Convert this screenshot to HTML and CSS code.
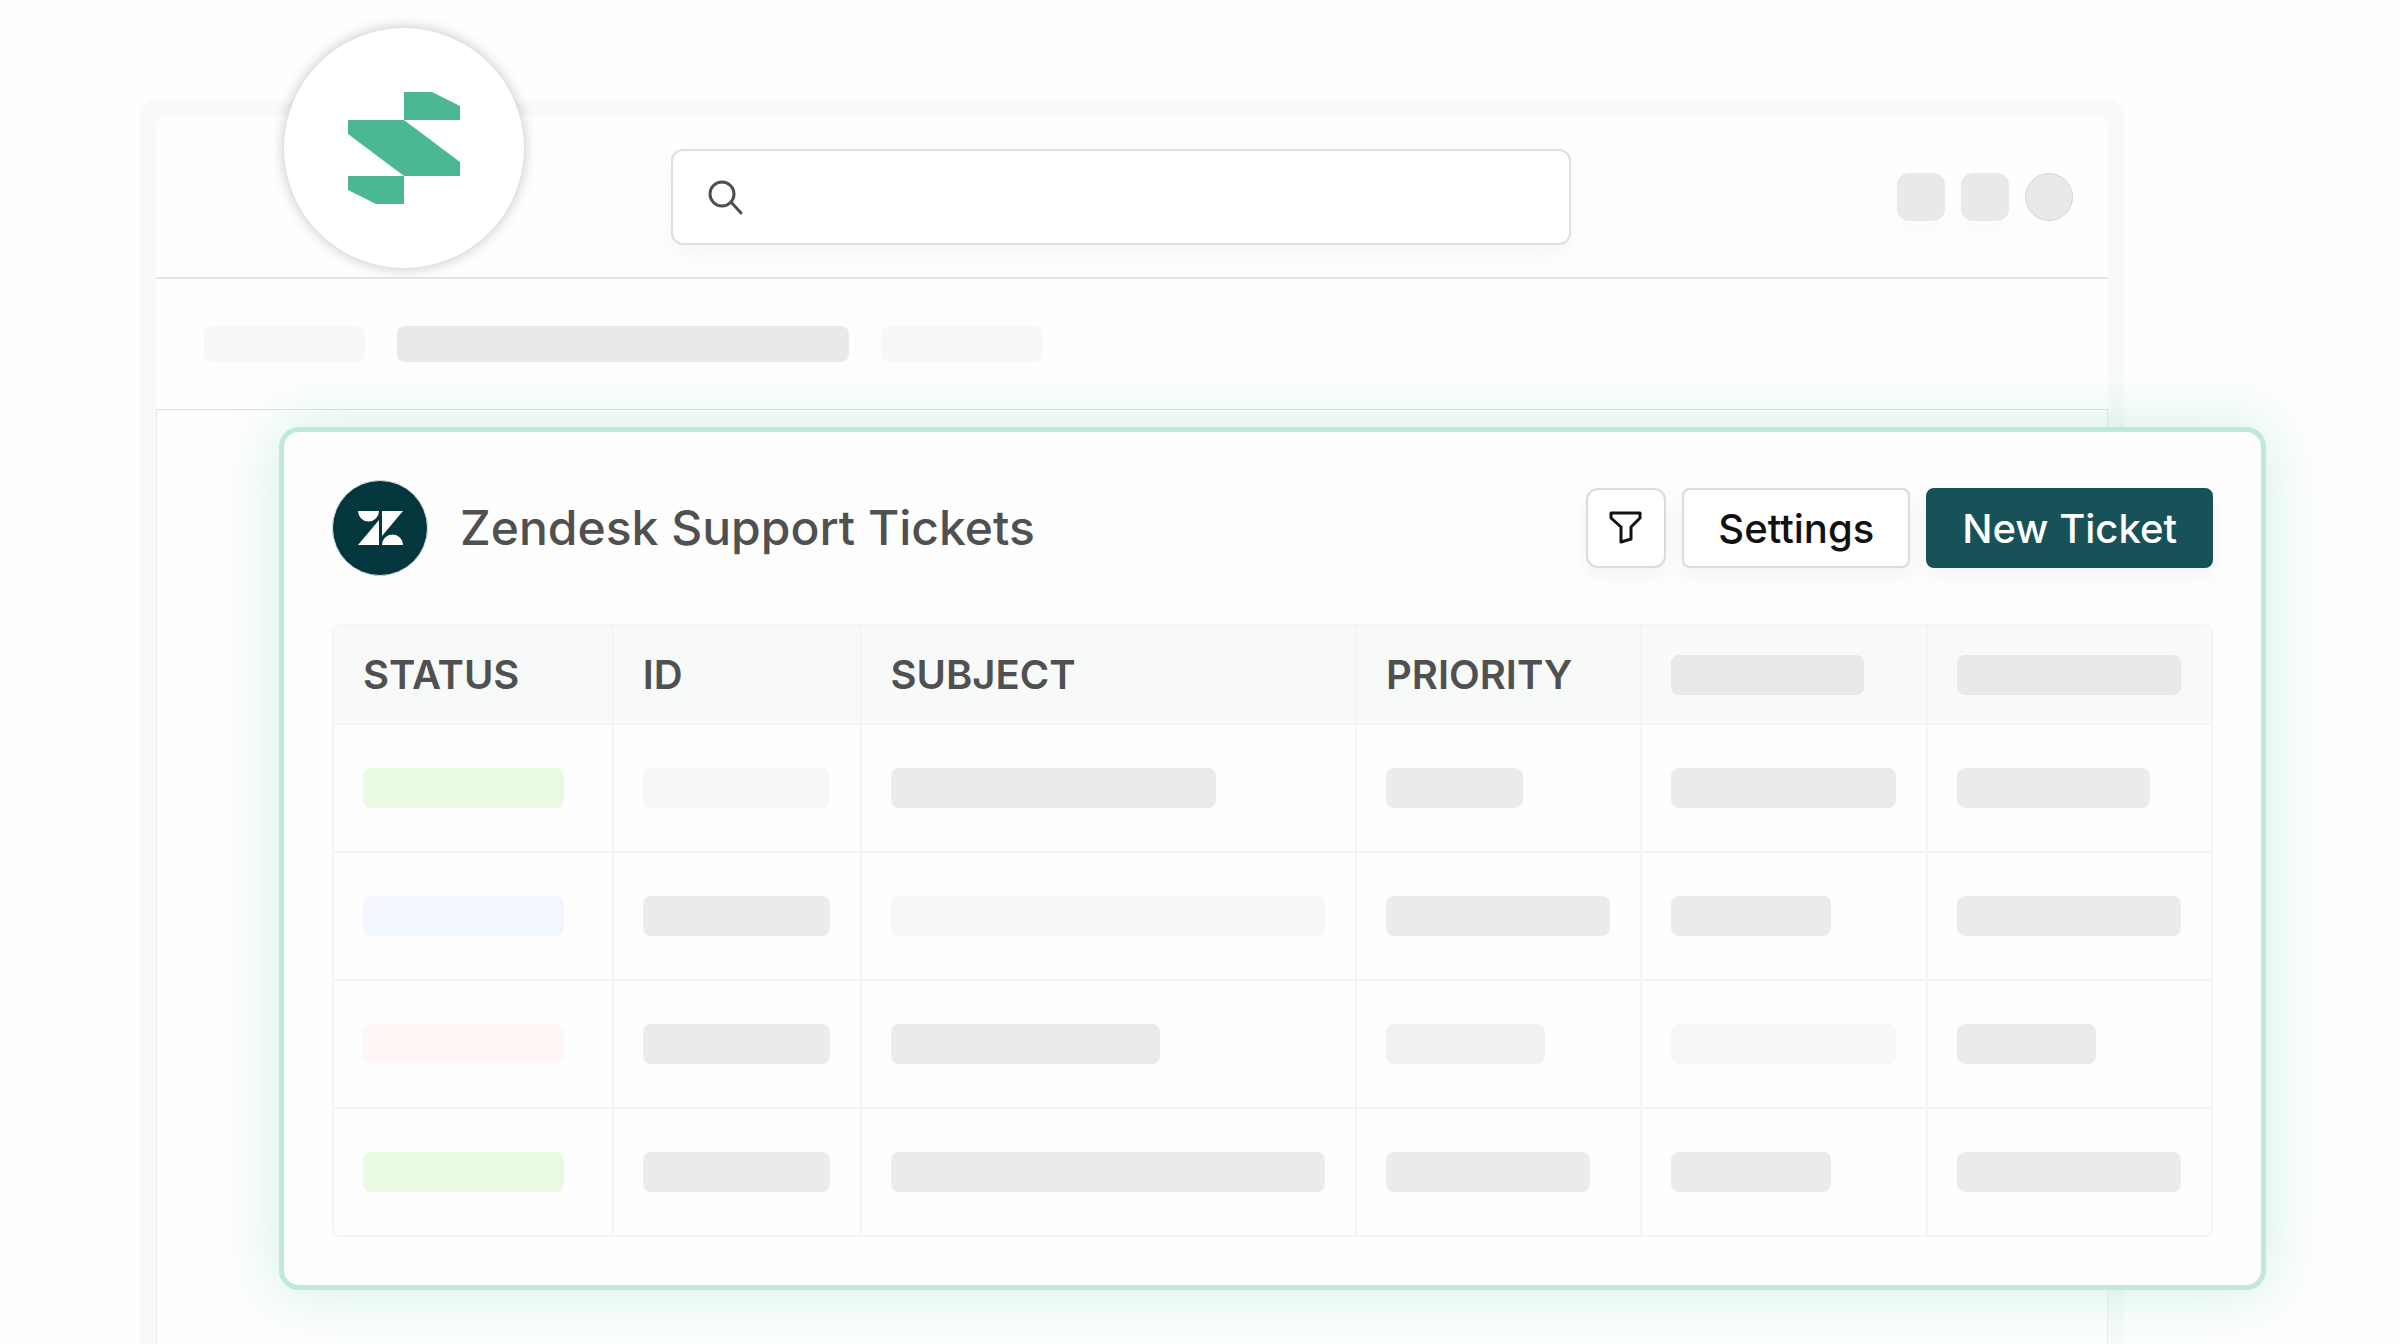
FILE: index.html
```html
<!DOCTYPE html>
<html lang="en">
<head>
    <meta charset="utf-8">
    <meta name="viewport" content="width=device-width, initial-scale=1">
    <title>Zendesk Support Tickets</title>
    <link rel="stylesheet" href="styles.css">
</head>
<body>
    <div class="window">
        <div class="badge">
            <svg class="badge-logo" viewBox="0 0 112 112" aria-hidden="true">
                <path d="M56 0H84L112 14V28H56Z M0 28H56L112 70V84H56L0 42Z M0 84H56V112H28L0 98Z"/>
            </svg>
        </div>

        <header class="topbar">
            <label class="search">
                <svg class="search-icon" viewBox="0 0 36 36" aria-hidden="true">
                    <circle cx="15" cy="15" r="12"/>
                    <path d="M24 23L34 34"/>
                </svg>
                <input type="search" class="search-input" aria-label="Search">
            </label>
            <div class="topbar-items">
                <span class="tile"></span>
                <span class="tile"></span>
                <span class="tile round"></span>
            </div>
        </header>

        <nav class="tabs">
            <span class="tab light"></span>
            <span class="tab wide"></span>
            <span class="tab light"></span>
        </nav>

        <main class="content">
            <section class="card">
                <div class="card-header">
                    <svg class="avatar" viewBox="0 0 96 96" aria-hidden="true">
                        <circle class="avatar-bg" cx="48" cy="48" r="47.5"/>
                        <path d="M26 31H47A10.5 10.5 0 0 1 26 31Z M47 40V65H26Z M50 31H71L50 56Z M50 65A10.5 10.5 0 0 1 71 65Z"/>
                    </svg>
                    <h1 class="card-title">Zendesk Support Tickets</h1>
                    <div class="actions">
                        <button type="button" class="btn btn-icon" aria-label="Filter">
                            <svg class="filter-icon" viewBox="0 0 36 36" aria-hidden="true">
                                <path d="M3 3H32V8L23 17V29L13 32V17L3 8Z"/>
                            </svg>
                        </button>
                        <button type="button" class="btn">Settings</button>
                        <button type="button" class="btn btn-primary">New Ticket</button>
                    </div>
                </div>

                <table class="tickets">
                    <colgroup>
                        <col class="col-status">
                        <col class="col-id">
                        <col class="col-subject">
                        <col class="col-other">
                        <col class="col-other">
                        <col class="col-other">
                    </colgroup>
                    <thead>
                        <tr>
                            <th>STATUS</th>
                            <th>ID</th>
                            <th>SUBJECT</th>
                            <th>PRIORITY</th>
                            <th><span class="bar dark w-86"></span></th>
                            <th><span class="bar dark"></span></th>
                        </tr>
                    </thead>
                    <tbody>
                        <tr>
                            <td><span class="bar green w-92"></span></td>
                            <td><span class="bar light"></span></td>
                            <td><span class="bar w-75"></span></td>
                            <td><span class="bar w-61"></span></td>
                            <td><span class="bar"></span></td>
                            <td><span class="bar w-86"></span></td>
                        </tr>
                        <tr>
                            <td><span class="bar blue w-92"></span></td>
                            <td><span class="bar"></span></td>
                            <td><span class="bar light"></span></td>
                            <td><span class="bar"></span></td>
                            <td><span class="bar w-71"></span></td>
                            <td><span class="bar"></span></td>
                        </tr>
                        <tr>
                            <td><span class="bar red w-92"></span></td>
                            <td><span class="bar"></span></td>
                            <td><span class="bar w-62"></span></td>
                            <td><span class="bar mid w-71"></span></td>
                            <td><span class="bar light"></span></td>
                            <td><span class="bar w-62"></span></td>
                        </tr>
                        <tr>
                            <td><span class="bar green w-92"></span></td>
                            <td><span class="bar"></span></td>
                            <td><span class="bar"></span></td>
                            <td><span class="bar w-91"></span></td>
                            <td><span class="bar w-71"></span></td>
                            <td><span class="bar"></span></td>
                        </tr>
                    </tbody>
                </table>
            </section>
        </main>
    </div>
</body>
</html>
```
FILE: styles.css
```css
* {
    box-sizing: border-box;
}
body {
    margin: 0;
    min-height: 100vh;
    padding: 100px 276px 0 140px;
    display: flex;
    overflow-x: hidden;
    background: #fefefe;
    color: #505050;
    font-family: Inter, "Liberation Sans", sans-serif;
}

.window {
    position: relative;
    flex: 1;
    display: flex;
    flex-direction: column;
    border: 16px solid #f8faf9;
    border-bottom: 0;
    border-radius: 16px 16px 0 0;
    background: #f8faf9;
}

/* round logo over the window corner */
.badge {
    position: absolute;
    top: -88px;
    left: 128px;
    width: 240px;
    height: 240px;
    display: flex;
    align-items: center;
    justify-content: center;
    border-radius: 50%;
    background: #fff;
    box-shadow: 0 0 14px rgba(0, 0, 0, 0.24);
}
.badge-logo {
    width: 112px;
    height: 112px;
    fill: #4cb793;
}

.topbar {
    display: flex;
    align-items: center;
    justify-content: space-between;
    height: 163px;
    padding: 0 35px 0 26.4%;
    border-bottom: 2px solid #e4e6e5;
    border-radius: 14px 14px 0 0;
    background: #fefefe;
}
.search {
    display: flex;
    align-items: center;
    gap: 16px;
    width: 64.2%;
    height: 96px;
    padding: 0 34px;
    border: 2px solid #dedfdf;
    border-radius: 12px;
    background: #fff;
    box-shadow: 0 8px 20px rgba(0, 0, 0, 0.04);
}
.search-icon {
    width: 36px;
    height: 36px;
    fill: none;
    stroke: #4f4f4f;
    stroke-width: 3;
    stroke-linecap: round;
}
.search-input {
    flex: 1;
    border: 0;
    outline: 0;
    background: none;
    font: inherit;
    font-size: 40px;
}
.topbar-items {
    display: flex;
    align-items: center;
    gap: 16px;
}
.tile {
    width: 48px;
    height: 48px;
    border-radius: 12px;
    background: #e7eae8;
    box-shadow: 0 8px 16px rgba(0, 0, 0, 0.02);
}
.round {
    border: 1px solid #d6d8d7;
    border-radius: 50%;
    box-shadow: none;
}

.tabs {
    display: flex;
    align-items: center;
    gap: 32px;
    height: 131px;
    padding: 0 48px;
    border-bottom: 1px solid #dfe2e1;
    background: #fefefe;
}
.tab {
    width: 161px;
    height: 36px;
    border-radius: 8px;
    background: #e7eae8;
}
.wide {
    width: 452px;
}

.content {
    flex: 1;
    padding: 17px 0 48px 122px;
    border: 1px solid #eaecec;
    border-width: 0 1px;
    background: #fefefe;
}
/* the card hangs out of the window on the right */
.card {
    position: relative;
    margin-right: -159px;
    padding: 48px;
    border: 5px solid #c2e8da;
    border-radius: 20px;
    background: #fefefe;
    box-shadow: 0 0 60px rgba(50, 205, 130, 0.24);
}
.card-header {
    display: flex;
    align-items: center;
    gap: 32px;
    margin-bottom: 48px;
}
.avatar {
    width: 96px;
    height: 96px;
    fill: #fff;
}
.avatar-bg {
    fill: #03363d;
    stroke: #d9dddd;
    stroke-width: 1;
}
.card-title {
    flex: 1;
    margin: 0;
    font-size: 48px;
    font-weight: 500;
    line-height: 60px;
}
.actions {
    display: flex;
    gap: 16px;
}
.btn {
    height: 80px;
    padding: 2px 34px 0;
    border: 2px solid #dadbdb;
    border-radius: 8px;
    background: #fff;
    color: #111;
    font: inherit;
    font-size: 40px;
    font-weight: 500;
    line-height: 48px;
    box-shadow: 0 8px 20px rgba(0, 0, 0, 0.05);
}
.btn-icon {
    display: flex;
    align-items: center;
    justify-content: center;
    width: 80px;
    padding: 0;
    border-radius: 12px;
}
.filter-icon {
    width: 36px;
    height: 36px;
    fill: none;
    stroke: #111;
    stroke-width: 3;
    stroke-linejoin: round;
}
.btn-primary {
    border-color: #185259;
    background: #185259;
    color: #fff;
}

.tickets {
    width: 100%;
    table-layout: fixed;
    border: 2px solid #f4f6f5;
    border-radius: 8px;
    border-spacing: 0;
    overflow: hidden;
}
.col-status {
    width: 14.8%;
}
.col-id {
    width: 13.2%;
}
.col-subject {
    width: 26.4%;
}
.col-other {
    width: 15.2%;
}
th, td {
    padding: 0 30px 0 29px;
    text-align: left;
    border-left: 2px solid #f4f6f5;
}
th:first-child, td:first-child {
    border-left: 0;
}
th {
    height: 97px;
    background: #f8faf9;
    font-size: 40px;
    font-weight: 600;
    line-height: 48px;
}
td {
    height: 128px;
    border-top: 2px solid #f4f6f5;
}

/* placeholder bars */
.bar {
    display: block;
    height: 40px;
    border-radius: 8px;
    background: #eaeceb;
}
.dark {
    background: #e7eae8;
}
.mid {
    background: #f1f1f1;
}
.light {
    background: #f7f7f7;
}
.green {
    background: #e9fae0;
}
.blue {
    background: #f1f6ff;
}
.red {
    background: #fff6f6;
}
.w-61 {
    width: 61%;
}
.w-62 {
    width: 62%;
}
.w-71 {
    width: 71%;
}
.w-75 {
    width: 75%;
}
.w-86 {
    width: 86%;
}
.w-91 {
    width: 91%;
}
.w-92 {
    width: 92%;
}
```
